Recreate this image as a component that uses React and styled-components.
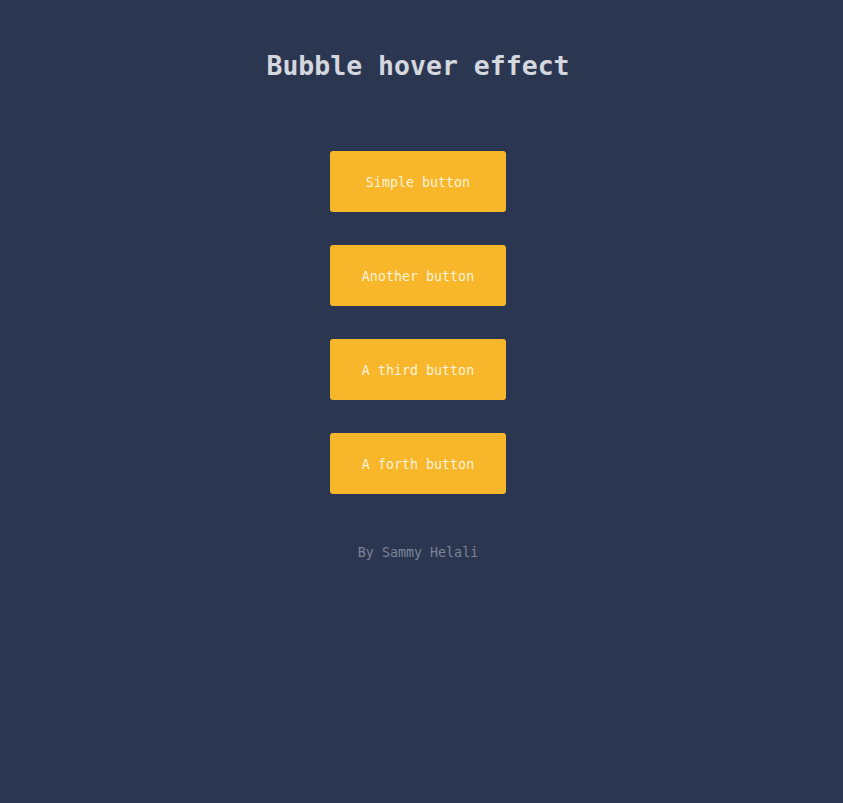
import React from "react";
import styled, { createGlobalStyle } from "styled-components";

const Global = createGlobalStyle`
  html, body { margin: 0; padding: 0; background: #2b3650; }
  body { font-family: "DejaVu Sans Mono", "Liberation Mono", monospace; min-height: 803px; }
`;

const Page = styled.main`
  display: flex;
  flex-direction: column;
  align-items: center;
  padding: 50px 7px 0 0;
`;

const Title = styled.h1`
  margin: 0 0 70px;
  font-size: 26.5px;
  line-height: 31px;
  font-weight: bold;
  color: #d4d7de;
`;

const Buttons = styled.div`
  display: flex;
  flex-direction: column;
  gap: 33px;
`;

const Button = styled.button`
  width: 176px;
  height: 61px;
  padding: 1px 0 0;
  border: none;
  border-radius: 3px;
  background: #f8b72a;
  color: #fff3dc;
  font-family: inherit;
  font-size: 13.33px;
  cursor: pointer;
`;

const Credit = styled.p`
  margin: 51px 0 0;
  font-size: 13.33px;
  line-height: 16px;
  color: #7c8498;
`;

export default function App() {
  return (
    <>
      <Global />
      <Page>
        <Title>Bubble hover effect</Title>
        <Buttons>
          <Button>Simple button</Button>
          <Button>Another button</Button>
          <Button>A third button</Button>
          <Button>A forth button</Button>
        </Buttons>
        <Credit>By Sammy Helali</Credit>
      </Page>
    </>
  );
}
